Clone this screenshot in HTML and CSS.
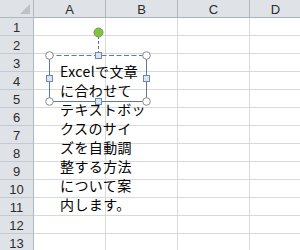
FILE: index.html
```html
<!DOCTYPE html>
<html lang="ja">
<head>
<meta charset="utf-8">
<link rel="stylesheet" href="styles.css">
</head>
<body>
<div class="sheet">
  <div class="grid">
    <div class="corner"><span class="tri"></span></div>
    <div class="ch">A</div><div class="ch">B</div><div class="ch">C</div><div class="ch last">D</div>

    <div class="rh">1</div><div class="c"></div><div class="c"></div><div class="c"></div><div class="c last"></div>
    <div class="rh">2</div><div class="c"></div><div class="c"></div><div class="c"></div><div class="c last"></div>
    <div class="rh">3</div><div class="c"></div><div class="c"></div><div class="c"></div><div class="c last"></div>
    <div class="rh">4</div><div class="c"></div><div class="c"></div><div class="c"></div><div class="c last"></div>
    <div class="rh">5</div><div class="c"></div><div class="c"></div><div class="c"></div><div class="c last"></div>
    <div class="rh">6</div><div class="c"></div><div class="c"></div><div class="c"></div><div class="c last"></div>
    <div class="rh">7</div><div class="c"></div><div class="c"></div><div class="c"></div><div class="c last"></div>
    <div class="rh">8</div><div class="c"></div><div class="c"></div><div class="c"></div><div class="c last"></div>
    <div class="rh">9</div><div class="c"></div><div class="c"></div><div class="c"></div><div class="c last"></div>
    <div class="rh">10</div><div class="c"></div><div class="c"></div><div class="c"></div><div class="c last"></div>
    <div class="rh">11</div><div class="c"></div><div class="c"></div><div class="c"></div><div class="c last"></div>
    <div class="rh">12</div><div class="c"></div><div class="c"></div><div class="c"></div><div class="c last"></div>
    <div class="rh">13</div><div class="c"></div><div class="c"></div><div class="c"></div><div class="c last"></div>
  </div>

  <div class="textbox">
    <div class="tb-text">Excelで文章<br>に合わせて<br>テキストボッ<br>クスのサイ<br>ズを自動調<br>整する方法<br>について案<br>内します。</div>
  </div>

  <svg class="handles" width="300" height="250" viewBox="0 0 300 250">
    <line x1="98.5" y1="36" x2="98.5" y2="52" stroke="#5a7495" stroke-width="1" stroke-dasharray="3 2"/>
    <circle cx="98.5" cy="32.5" r="4.5" fill="#7dc832" stroke="#7a8a7a" stroke-width="1"/>
    <line x1="49" y1="55.5" x2="146" y2="55.5" stroke="#5f7a9c" stroke-width="1" stroke-dasharray="5 2.5"/>
    <line x1="49.5" y1="55" x2="49.5" y2="101" stroke="#5f7a9c" stroke-width="1"/>
    <line x1="146.5" y1="55" x2="146.5" y2="101" stroke="#5f7a9c" stroke-width="1"/>
    <line x1="49" y1="101.5" x2="146" y2="101.5" stroke="#5f7a9c" stroke-width="1"/>
    <g fill="#ffffff" stroke="#8a8a8a" stroke-width="1">
      <circle cx="49.5" cy="55.5" r="3.8"/>
      <circle cx="146.5" cy="55.5" r="3.8"/>
      <circle cx="49.5" cy="101.5" r="3.8"/>
      <circle cx="146.5" cy="101.5" r="3.8"/>
    </g>
    <g fill="#dbe5f1" stroke="#6a8bb3" stroke-width="1">
      <rect x="95.5" y="52.5" width="6" height="6"/>
      <rect x="95.5" y="98.5" width="6" height="6"/>
      <rect x="46.5" y="75.5" width="6" height="6"/>
      <rect x="143.5" y="75.5" width="6" height="6"/>
    </g>
  </svg>
</div>
</body>
</html>
```

FILE: styles.css
```css
html, body {
  margin: 0;
  padding: 0;
  background: #ffffff;
}
.sheet {
  position: relative;
  width: 300px;
  height: 250px;
  overflow: hidden;
}
.grid {
  display: grid;
  grid-template-columns: 34px 72px 72px 72px 51px;
  grid-template-rows: 18px repeat(13, 18px);
  font-family: "Liberation Sans", Arial, sans-serif;
}
.grid > div {
  box-sizing: border-box;
}
.corner {
  position: relative;
  background: #dfe3e8;
  border-right: 1px solid #b1b8c1;
  border-bottom: 1px solid #b1b8c1;
}
.tri {
  position: absolute;
  right: 3px;
  bottom: 3px;
  width: 0;
  height: 0;
  border-left: 10px solid transparent;
  border-bottom: 10px solid #bcc2ca;
}
.ch {
  background: #dfe3e8;
  border-right: 1px solid #b1b8c1;
  border-bottom: 1px solid #a9b0b9;
  display: flex;
  align-items: center;
  justify-content: center;
  font-size: 13px;
  color: #2b2b2b;
  padding-top: 1px;
}
.rh {
  background: #dfe3e8;
  border-right: 1px solid #b1b8c1;
  border-bottom: 1px solid #c5cad1;
  display: flex;
  align-items: center;
  justify-content: center;
  font-size: 13px;
  color: #2b2b2b;
  padding-top: 1px;
}
.c {
  border-right: 1px solid #d9d9d9;
  border-bottom: 1px solid #d9d9d9;
}
.last {
  border-right: none;
}
.textbox {
  position: absolute;
  left: 49px;
  top: 55px;
  width: 97px;
  height: 46px;
}
.tb-text {
  padding: 7px 0 0 11px;
  font-family: "Noto Sans CJK JP", "Liberation Sans", sans-serif;
  font-size: 14px;
  letter-spacing: 0.4px;
  line-height: 19px;
  color: #000000;
  white-space: nowrap;
}
.handles {
  position: absolute;
  left: 0;
  top: 0;
}
```
